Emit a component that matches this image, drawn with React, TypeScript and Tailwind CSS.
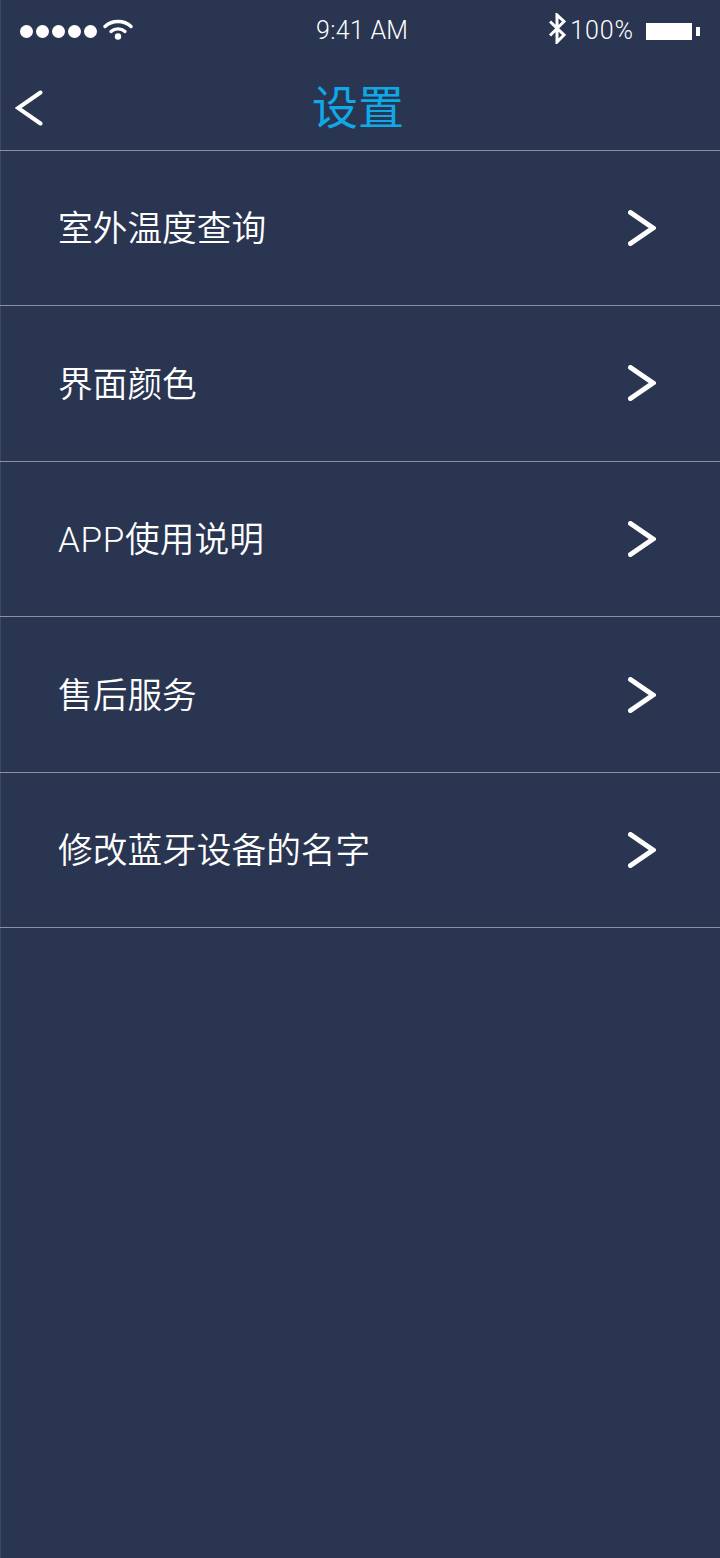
const MENU_ITEMS = [
  { prefix: "", label: "室外温度查询" },
  { prefix: "", label: "界面颜色" },
  { prefix: "APP", label: "使用说明" },
  { prefix: "", label: "售后服务" },
  { prefix: "", label: "修改蓝牙设备的名字" },
];

function Chevron({ className, flip = false, weight }: { className: string; flip?: boolean; weight: number }) {
  return (
    <svg viewBox="0 0 28 36" className={className} fill="none" stroke="currentColor" strokeLinecap="round" strokeLinejoin="miter">
      <path d={flip ? "M25.5 2.5 3 18 25.5 33.5" : "M2.5 2.5 25 18 2.5 33.5"} strokeWidth={weight} />
    </svg>
  );
}

function StatusBar() {
  return (
    <div className="flex h-[60px] shrink-0 items-center pl-[20px] pr-[20px] font-['Roboto','Noto_Sans_CJK_SC',sans-serif] text-[25px] font-[350] leading-none text-white">
      <div className="flex w-[296px] items-center gap-[6px]">
        <div className="mt-[2px] flex gap-[3px]">
          {[0, 1, 2, 3, 4].map((i) => (
            <span key={i} className="size-[13px] rounded-full bg-white" />
          ))}
        </div>
        <svg viewBox="0 0 30 21" className="mb-[2px] h-[21px] w-[30px]" fill="none" stroke="white" strokeWidth="3.4" strokeLinecap="round">
          <path d="M2 7.5C9 .8 21 .8 28 7.5" />
          <path d="M8 12.5C12 9 18 9 22 12.5" />
          <circle cx="15" cy="17.5" r="3.2" fill="white" stroke="none" />
        </svg>
      </div>
      <span className="tracking-[0.3px]">9:41 AM</span>
      <div className="ml-auto flex items-center">
        <svg viewBox="0 0 17 31" className="mb-[3px] mr-[4px] h-[31px] w-[17px]" fill="none" stroke="white" strokeWidth="3">
          <path d="M1 8.5 15 22 8 29V2l7 6.5L1 22.5" />
        </svg>
        <span className="tracking-[0.9px]">100%</span>
        <div className="ml-[12px] mt-[2px] h-[17px] w-[46px] bg-white" />
        <div className="ml-[4px] mt-[2px] h-[9px] w-[4px] bg-white" />
      </div>
    </div>
  );
}

export default function App() {
  return (
    <div className="flex min-h-[1558px] w-[720px] flex-col bg-[#2a3551] font-['Liberation_Sans','Noto_Sans_CJK_SC',sans-serif] shadow-[inset_1px_0_0_#3d4a66]">
      <StatusBar />
      <header className="grid h-[90.5px] shrink-0 grid-cols-[1fr_auto_1fr] items-center border-b border-b-[#8b91a1] pl-[15px] pr-[19px]">
        <Chevron flip weight={4} className="mt-[6px] h-[36px] w-[28px] text-white" />
        <h1 className="pt-[6px] text-[46px] leading-none text-[#0fa9e8]">设置</h1>
      </header>
      <ul>
        {MENU_ITEMS.map((item) => (
          <li key={item.label} className="flex h-[155.6px] items-center justify-between border-b border-b-[#8b91a1] pl-[58px] pr-[64px]">
            <span className="pt-[3px] text-[34.7px] font-[350] leading-none text-white">
              {item.prefix && <span className="font-['Roboto'] text-[35px] font-light tracking-[0.7px]">{item.prefix}</span>}
              {item.label}
            </span>
            <Chevron weight={5} className="h-[36px] w-[28px] text-white" />
          </li>
        ))}
      </ul>
    </div>
  );
}
